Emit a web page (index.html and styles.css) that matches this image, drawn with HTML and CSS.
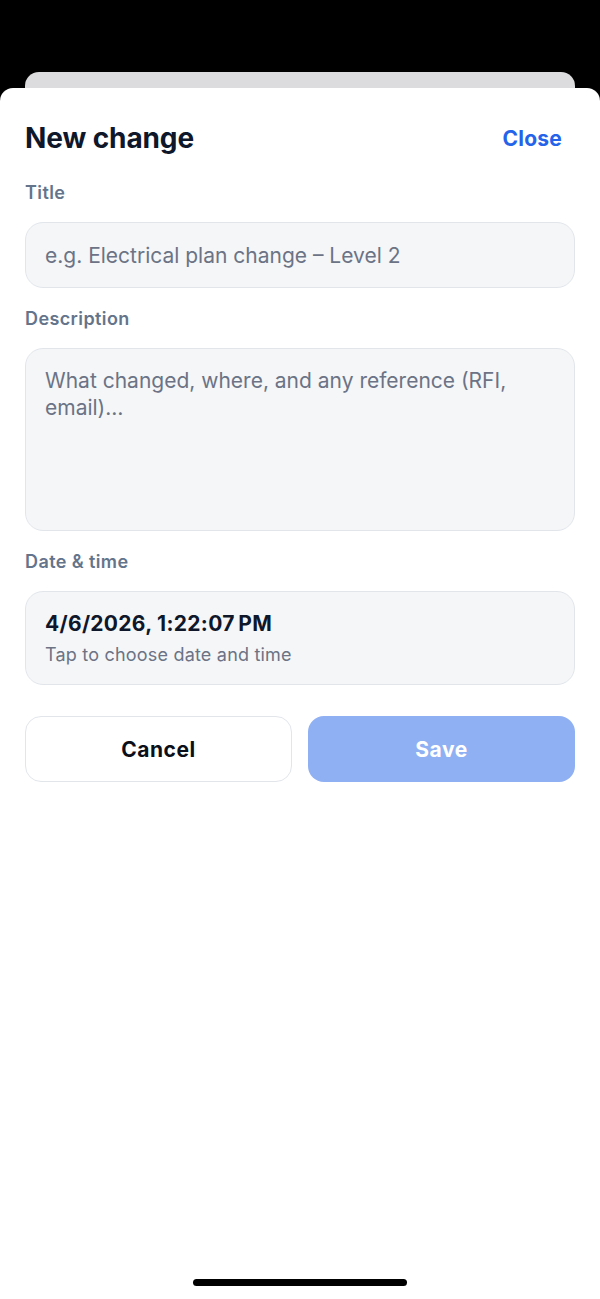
FILE: index.html
```html
<!DOCTYPE html>
<html lang="en">
<head>
<meta charset="utf-8">
<title>New change</title>
<link rel="stylesheet" href="styles.css">
</head>
<body>
<div class="screen">
  <div class="behind"></div>
  <div class="sheet">
    <div class="header">
      <h1 class="title">New change</h1>
      <span class="close">Close</span>
    </div>

    <div class="label label-first">Title</div>
    <div class="field field-input"><span class="placeholder">e.g. Electrical plan change – Level 2</span></div>

    <div class="label">Description</div>
    <div class="field field-textarea"><span class="placeholder">What changed, where, and any reference (RFI, email)…</span></div>

    <div class="label">Date &amp; time</div>
    <div class="field field-date">
      <div class="date-value">4/6/2026, 1:22:07&#8239;PM</div>
      <div class="date-hint">Tap to choose date and time</div>
    </div>

    <div class="actions">
      <div class="btn btn-cancel">Cancel</div>
      <div class="btn btn-save">Save</div>
    </div>

    <div class="spacer"></div>
    <div class="home-indicator"></div>
  </div>
</div>
</body>
</html>
```

FILE: styles.css
```css
* { box-sizing: border-box; }
html, body { margin: 0; padding: 0; }
body {
  background: #000;
  font-family: Inter, "Noto Sans", "Liberation Sans", sans-serif;
  -webkit-font-smoothing: antialiased;
}
.screen {
  width: 600px;
  height: 1299px;
  display: flex;
  flex-direction: column;
  background: #000;
  overflow: hidden;
}
.behind {
  margin: 72px 25px 0;
  height: 16px;
  flex: none;
  background: #dcdcde;
  border-radius: 14px 14px 0 0;
}
.sheet {
  flex: 1;
  background: #fff;
  border-radius: 13px 13px 0 0;
  padding: 0 25px;
  display: flex;
  flex-direction: column;
}
.header {
  display: flex;
  justify-content: space-between;
  align-items: center;
  height: 40px;
  margin-top: 30px;
}
.title {
  margin: 0;
  font-size: 28px;
  font-weight: 700;
  color: #0f172a;
  letter-spacing: -0.1px;
}
.close {
  font-size: 21px;
  font-weight: 700;
  color: #2563eb;
  margin-right: 13px;
  letter-spacing: 0.2px;
}
.label {
  margin-top: 20px;
  margin-bottom: 18px;
  line-height: 22px;
  font-size: 18px;
  font-weight: 600;
  color: #64748b;
  letter-spacing: 0.4px;
}
.label-first { margin-top: 24px; }
.field {
  background: #f5f6f8;
  border: 1px solid #e2e6eb;
  border-radius: 18px;
  padding: 0 19px;
}
.placeholder {
  font-size: 21px;
  color: #6b7385;
}
.field-input {
  height: 66px;
  display: flex;
  align-items: center;
}
.field-textarea {
  height: 183px;
  padding-top: 19px;
  line-height: 26px;
  padding-right: 40px;
}
.field-date {
  height: 94px;
  padding-top: 20px;
}
.date-value {
  font-size: 21px;
  line-height: 24px;
  font-weight: 700;
  color: #0f172a;
  letter-spacing: 0.3px;
}
.date-hint {
  margin-top: 8px;
  font-size: 18px;
  line-height: 22px;
  color: #6b7385;
  letter-spacing: 0.2px;
}
.actions {
  margin-top: 31px;
  display: grid;
  grid-template-columns: 1fr 1fr;
  gap: 16px;
}
.btn {
  height: 66px;
  border-radius: 16px;
  display: flex;
  align-items: center;
  justify-content: center;
  font-size: 21px;
  font-weight: 700;
  letter-spacing: 0.5px;
}
.btn-cancel {
  background: #fff;
  border: 1px solid #e2e6eb;
  color: #0b0f19;
}
.btn-save {
  background: #8fb0f3;
  color: #fff;
}
.spacer { flex: 1; }
.home-indicator {
  align-self: center;
  width: 214px;
  height: 7px;
  border-radius: 4px;
  background: #000;
  margin-bottom: 13px;
}
```
